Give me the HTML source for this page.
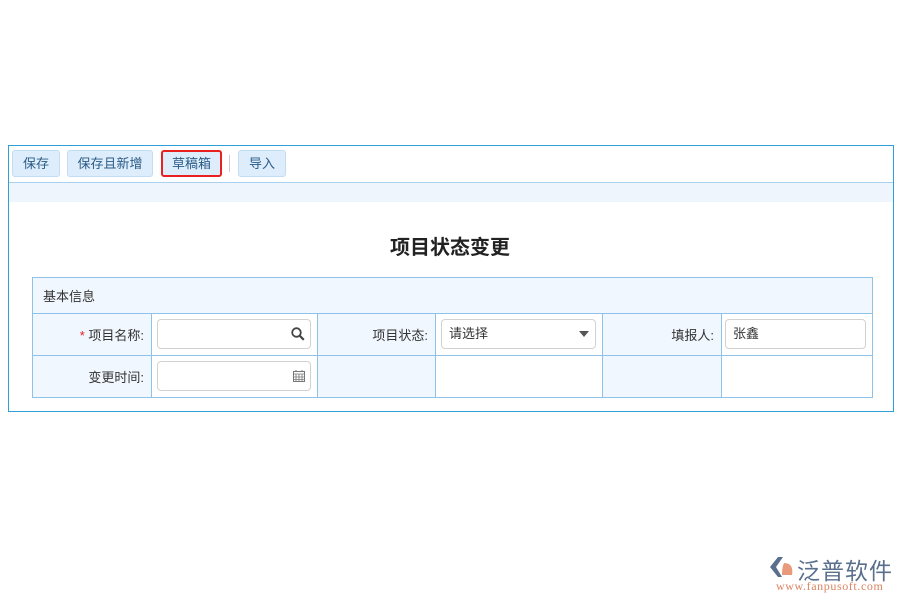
<!DOCTYPE html>
<html><head><meta charset="utf-8"><style>
*{margin:0;padding:0;box-sizing:border-box}
body{width:900px;height:600px;background:#fff;position:relative;font-family:"Liberation Sans","Noto Sans CJK SC",sans-serif;font-size:13px;color:#333;overflow:hidden}
.abs{position:absolute}
.frame{left:8px;top:145px;width:886px;height:267px;border:1px solid #2f9fd8}
.tb{left:9px;top:146px;width:884px;height:37px;border-bottom:1px solid #a9d0ee;background:#fff}
.btn{position:absolute;top:4px;height:27px;background:#deedfb;border:1px solid #c2dcf3;border-radius:3px;color:#2a5b86;font-size:13px;line-height:25px;text-align:center}
.band{left:9px;top:183px;width:884px;height:19px;background:#eef5fc}
.title{left:0;width:900px;top:231px;text-align:center;font-size:20px;font-weight:bold;color:#222}
table{position:absolute;left:32px;top:277px;border-collapse:collapse}
td{border:1px solid #8fc2e8;padding:0}
.l{background:#f1f7fe;text-align:right;padding-right:7px}
.in{position:absolute;height:30px;border:1px solid #d2d2d2;border-radius:4px;background:#fff;font-size:13px;line-height:28px;padding-left:7px}
</style></head><body>
<div class="abs frame"></div>
<div class="abs tb">
<div class="btn" style="left:3px;width:48px">保存</div>
<div class="btn" style="left:58px;width:86px">保存且新增</div>
<div class="btn" style="left:152px;width:61px;background:#deedfb;border:2px solid #e8201f;line-height:23px">草稿箱</div>
<div class="abs" style="left:220px;top:9px;width:1px;height:17px;background:#ccc"></div>
<div class="btn" style="left:229px;width:48px">导入</div>
</div>
<div class="abs band"></div>
<div class="abs title">项目状态变更</div>
<table>
<tr style="height:36px"><td colspan="6" style="background:#f1f7fe;padding-left:10px;width:840px">基本信息</td></tr>
<tr style="height:42px"><td class="l" style="width:119px"><span style="color:#e02020">*</span> 项目名称:</td><td style="width:166px"></td><td class="l" style="width:118px">项目状态:</td><td style="width:167px"></td><td class="l" style="width:119px">填报人:</td><td style="width:151px"></td></tr>
<tr style="height:42px"><td class="l">变更时间:</td><td></td><td class="l"></td><td></td><td class="l"></td><td></td></tr>
</table>
<div class="in" style="left:157px;top:319px;width:154px"><svg class="abs" style="right:5px;top:7px" width="14" height="14" viewBox="0 0 14 14"><circle cx="5.5" cy="5.5" r="4.3" fill="none" stroke="#444" stroke-width="1.8"/><path d="M8.6 8.6L12.8 12.8" stroke="#444" stroke-width="2.2"/></svg></div>
<div class="in" style="left:441px;top:319px;width:155px">请选择<svg class="abs" style="right:6px;top:11px" width="10" height="6"><path d="M0 0H10L5 6Z" fill="#555"/></svg></div>
<div class="in" style="left:725px;top:319px;width:141px">张鑫</div>
<div class="in" style="left:157px;top:361px;width:154px"><svg class="abs" style="right:5px;top:8px" width="12" height="12" viewBox="0 0 12 12"><rect x="0.5" y="1.5" width="11" height="10" fill="none" stroke="#777"/><path d="M0 4H12M3 4V12M6 4V12M9 4V12M0 7H12M0 9.5H12" stroke="#777" stroke-width="0.8"/><path d="M3 0V2M9 0V2" stroke="#777"/></svg></div>
<div class="abs" style="left:770px;top:555px;width:26px;height:24px"><svg width="26" height="24"><path d="M8 2L0 12L8 22L12 22L6 12L13 2Z" fill="#5a6f8e"/><path d="M14 8Q24 8 22 20L12 20Q12 12 14 8Z" fill="#e89a7a"/></svg></div>
<div class="abs" style="left:797px;top:552px;font-size:23px;color:#5a6f8e;letter-spacing:1px">泛普软件</div>
<div class="abs" style="left:776px;top:579px;font-size:12px;color:#d98462;font-family:'Liberation Serif',serif;letter-spacing:0.6px">www.fanpusoft.com</div>
</body></html>
